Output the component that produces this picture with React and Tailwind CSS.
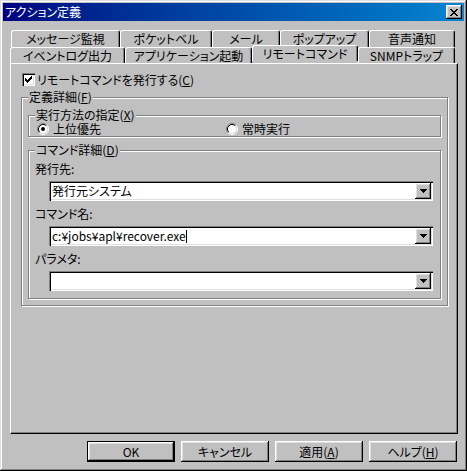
import React from "react";

const raised = "shadow-[inset_-1px_-1px_#000,inset_1px_1px_#fff,inset_-2px_-2px_#808080,inset_2px_2px_#dfdfdf]";
const sunken = "shadow-[inset_1px_1px_#808080,inset_2px_2px_#000,inset_-1px_-1px_#fff,inset_-2px_-2px_#dfdfdf]";
const etched = "border border-[#808080] shadow-[inset_1px_1px_#fff,1px_1px_#fff]";

// little pixel drawings (check, close X, combo arrow)
const Pixels = ({ rows, color = "#000" }) => (
  <svg width={rows[0].length} height={rows.length} shapeRendering="crispEdges">
    {rows.map((row, y) =>
      row.split("").map((c, x) =>
        c === "X" ? <rect key={x + "-" + y} x={x} y={y} width="1" height="1" fill={color} /> : null
      )
    )}
  </svg>
);

const checkRows = ["......X", ".....XX", "X...XXX", "XX.XXX.", "XXXXX..", ".XXX...", "..X...."];
const closeRows = ["XX....XX", ".XX..XX.", "..XXXX..", "...XX...", "..XXXX..", ".XX..XX.", "XX....XX"];
const arrowRows = ["XXXXXXX", ".XXXXX.", "..XXX..", "...X..."];

const U = ({ children }) => <span className="underline underline-offset-[1px]">{children}</span>;

const Radio = ({ checked }) => (
  <svg width="12" height="12" viewBox="0 0 12 12">
    <circle cx="6" cy="6" r="4.5" fill="#fff" />
    <path d="M2.11 9.89 A5.5 5.5 0 0 1 9.89 2.11" stroke="#808080" fill="none" />
    <path d="M9.89 2.11 A5.5 5.5 0 0 1 2.11 9.89" stroke="#fff" fill="none" />
    <path d="M2.82 9.18 A4.5 4.5 0 0 1 9.18 2.82" stroke="#000" fill="none" />
    <path d="M9.18 2.82 A4.5 4.5 0 0 1 2.82 9.18" stroke="#dfdfdf" fill="none" />
    {checked && <circle cx="6" cy="6" r="2" fill="#000" />}
  </svg>
);

const Legend = ({ children }) => (
  <div className="absolute -top-[7px] left-[6px] px-[1px] bg-[#c0c0c0] leading-[12px]">{children}</div>
);

const Combo = ({ children }) => (
  <div className={`mt-[6px] ml-[14px] w-[384px] h-[20px] bg-white ${sunken} flex items-center justify-between pl-[3px] pr-[2px]`}>
    <div className="flex items-center leading-[12px]">{children}</div>
    <div className={`w-[16px] h-[16px] bg-[#c0c0c0] ${raised} flex items-center justify-center`}>
      <Pixels rows={arrowRows} />
    </div>
  </div>
);

const backTabs = [
  ["メッセージ監視", "w-[109px]"],
  ["ポケットベル", "w-[92px]"],
  ["メール", "w-[68px]"],
  ["ポップアップ", "w-[89px]"],
  ["音声通知", "w-[86px]"],
];

const tabClass = "h-full flex items-center justify-center leading-[12px] border-t border-l border-white border-r border-r-black rounded-t-[3px] shadow-[inset_-1px_0_#808080] bg-[#c0c0c0]";

const App = () => {
  return (
    <div
      className={`w-[467px] h-[471px] bg-[#c0c0c0] p-[3px] flex flex-col text-[12px] text-black font-['Noto_Sans_CJK_JP',sans-serif] [font-feature-settings:'palt'] shadow-[inset_-1px_-1px_#000,inset_1px_1px_#dfdfdf,inset_-2px_-2px_#808080,inset_2px_2px_#fff]`}
    >
      {/* title bar */}
      <div className="h-[18px] flex items-center justify-between pl-[2px] pr-[2px] bg-linear-to-r from-[#000080] to-[#1084d0]">
        <span className="text-white leading-[12px]">アクション定義</span>
        <div className={`w-[16px] h-[14px] bg-[#c0c0c0] ${raised} flex items-center justify-center`}>
          <Pixels rows={closeRows} />
        </div>
      </div>

      <div className="pt-[9px] pl-[7px]">
        {/* tabs */}
        <div className="flex h-[17px] ml-[1px]">
          {backTabs.map(([label, w]) => (
            <div key={label} className={`${tabClass} ${w}`}>{label}</div>
          ))}
        </div>
        <div className="flex items-start h-[16px] relative z-10">
          <div className={`${tabClass} w-[115px]`}>イベントログ出力</div>
          <div className={`${tabClass} w-[127px]`}>アプリケーション起動</div>
          <div className={`${tabClass} w-[106px] h-[19px] -mt-[2px] pt-[1px]`}>リモートコマンド</div>
          <div className={`${tabClass} w-[97px]`}>SNMPトラップ</div>
        </div>

        {/* panel */}
        <div className="w-[448px] h-[371px] border-t border-l border-white border-r border-b border-r-black border-b-black shadow-[inset_-1px_-1px_#808080] pl-[11px] pt-[9px]">
          <div className="flex items-center h-[13px] gap-[2px]">
            <div className={`w-[13px] h-[13px] bg-white ${sunken} flex items-center justify-center`}>
              <Pixels rows={checkRows} />
            </div>
            <span className="leading-[12px]">リモートコマンドを発行する(<U>C</U>)</span>
          </div>

          <div className={`relative mt-[11px] -ml-[1px] w-[427px] h-[209px] ${etched} pt-[17px] pl-[6px]`}>
            <Legend>定義詳細(<U>F</U>)</Legend>

            <div className={`relative w-[413px] h-[22px] ${etched} flex items-center pt-[5px] pl-[8px]`}>
              <Legend>実行方法の指定(<U>X</U>)</Legend>
              <div className="w-[189px] flex items-center gap-[4px]">
                <Radio checked />
                <span className="leading-[12px]">上位優先</span>
              </div>
              <div className="flex items-center gap-[4px]">
                <Radio />
                <span className="leading-[12px]">常時実行</span>
              </div>
            </div>

            <div className={`relative mt-[13px] w-[413px] h-[149px] ${etched} pl-[6px] pt-[12px]`}>
              <Legend>コマンド詳細(<U>D</U>)</Legend>
              <div className="leading-[12px] h-[12px]">発行先:</div>
              <Combo>発行元システム</Combo>
              <div className="leading-[12px] h-[12px] mt-[7px]">コマンド名:</div>
              <Combo>
                c:¥jobs¥apl¥recover.exe
                <span className="inline-block w-[1px] h-[13px] bg-black" />
              </Combo>
              <div className="leading-[12px] h-[12px] mt-[7px]">パラメタ:</div>
              <Combo />
            </div>
          </div>
        </div>
      </div>

      {/* buttons */}
      <div className="flex justify-end gap-[6px] mt-[7px] pr-[7px] h-[21px]">
        <div className="w-[88px] h-full border border-black">
          <div className={`w-full h-full ${raised} flex items-center justify-center`}>OK</div>
        </div>
        <div className={`w-[88px] h-full ${raised} flex items-center justify-center`}>キャンセル</div>
        <div className={`w-[88px] h-full ${raised} flex items-center justify-center`}>適用(<U>A</U>)</div>
        <div className={`w-[88px] h-full ${raised} flex items-center justify-center`}>ヘルプ(<U>H</U>)</div>
      </div>
    </div>
  );
};

export default App;
